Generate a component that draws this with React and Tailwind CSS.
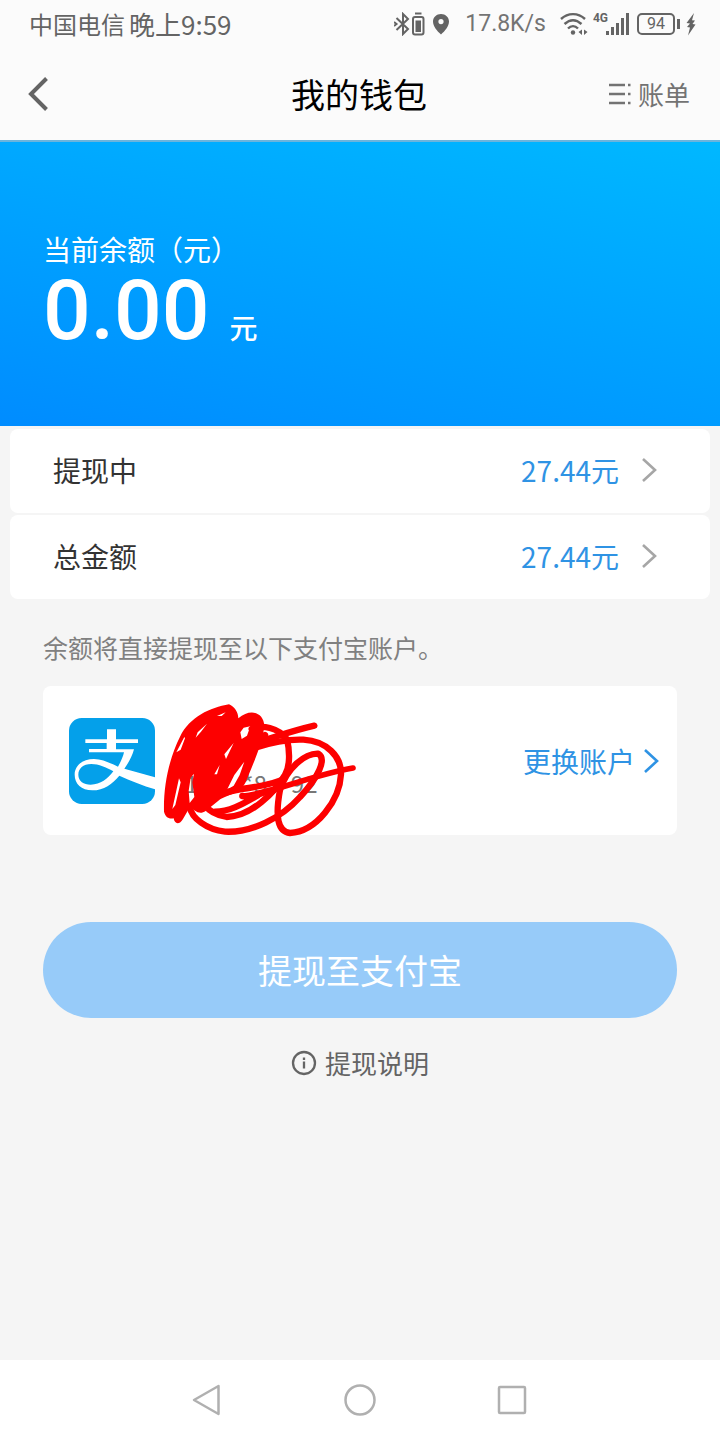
const cjk = "font-['Noto_Sans_CJK_SC',sans-serif]";

function Chevron({ className }) {
  return (
    <svg viewBox="0 0 16 26" className={className} fill="none" stroke="currentColor" strokeWidth="2.6" aria-hidden="true">
      <path d="M2 2 L14 13 L2 24" />
    </svg>
  );
}

function StatusBar() {
  return (
    <div className="flex h-12 items-center pl-[29px] pr-6 text-[#646464]">
      <span className="text-[24px] leading-8">中国电信</span>
      <span className="ml-1 text-[26px] leading-8">晚上9:59</span>
      <div className="ml-auto flex items-center">
        <svg viewBox="0 0 17 24" className="h-6 w-[17px]" fill="none" stroke="currentColor" strokeWidth="2" aria-hidden="true">
          <path d="M2.500 6 L14 17 L9 22 V2 L14 7 L2.500 18" />
          <path d="M0 10 L2.500 12 L0 14" />
        </svg>
        <svg viewBox="0 0 14 24" className="h-6 w-3.5" aria-hidden="true">
          <path d="M4 1.500 H10.500" stroke="currentColor" strokeWidth="2" />
          <rect x="2" y="5" width="10.500" height="17.500" rx="2" fill="none" stroke="currentColor" strokeWidth="2" />
          <rect x="4.500" y="8.500" width="5.500" height="11.500" fill="currentColor" />
        </svg>
        <svg viewBox="0 0 16 22" className="ml-2 h-[22px] w-4" fill="currentColor" fillRule="evenodd" aria-hidden="true">
          <path d="M8 1 C3.500 1 0 4.300 0 8.500 C0 13 4 18 8 21.500 C12 18 16 13 16 8.500 C16 4.300 12.500 1 8 1 Z M8 6 A2.600 2.600 0 1 1 8 11.200 A2.600 2.600 0 1 1 8 6 Z" />
        </svg>
        <span className="ml-4 font-[Roboto,sans-serif] text-[23px] leading-8 text-[#747474]">17.8K/s</span>
        <svg viewBox="0 0 29 24" className="ml-3.5 h-6 w-[29px]" fill="none" stroke="currentColor" strokeWidth="2.400" aria-hidden="true">
          <path d="M1 7 C8 0.500 18 0.500 25 7 M4.500 12 C10 7 16 7 21.500 12 M8 16.500 C11 13.500 15 13.500 18 16.500" />
          <circle cx="13" cy="20.500" r="2.200" fill="currentColor" stroke="none" />
          <path d="M22 17.500 V23 L18.500 20 Z M24 17.500 V23 L27.500 20 Z" fill="currentColor" stroke="none" />
        </svg>
        <span className="mb-3 ml-1 font-[Roboto,sans-serif] text-[12px] font-bold leading-3">4G</span>
        <svg viewBox="0 0 23 24" className="-ml-0.5 h-6 w-[23px]" fill="currentColor" aria-hidden="true">
          <path d="M0 19h3v4H0z M5 15h3v8H5z M10 11h3v12h-3z M15 6h3v17h-3z M20 1h3v22h-3z" />
        </svg>
        <span className="ml-2 flex h-[22px] w-[38px] items-center justify-center rounded-[5px] border-2 border-current font-[Roboto,sans-serif] text-[16px] leading-4">94</span>
        <span className="ml-0.5 h-2.5 w-[3px] bg-current" />
        <svg viewBox="0 0 10 24" className="ml-1.5 h-6 w-2.5" fill="currentColor" aria-hidden="true">
          <path d="M8 1 L0.500 11 L4 11.500 L1 15 L4 15.500 L2 23.500 L9.500 12.500 L6.500 12 L9 8.500 L6 8.200 Z" />
        </svg>
      </div>
    </div>
  );
}

function Header() {
  return (
    <header className="grid h-[92px] grid-cols-[1fr_auto_1fr] items-center pl-7 pr-[30px]">
      <button type="button" aria-label="返回" className="w-5 text-[#646464]">
        <svg viewBox="0 0 20 34" className="h-[34px] w-5" fill="none" stroke="currentColor" strokeWidth="4" aria-hidden="true">
          <path d="M18.500 1.500 L3 17 L18.500 32.500" />
        </svg>
      </button>
      <h1 className="text-[34px] font-normal leading-[48px] text-black">我的钱包</h1>
      <button type="button" className="flex items-center justify-self-end text-[26px] leading-9 text-[#737373]">
        <svg viewBox="0 0 23 22" className="mr-1.5 h-[22px] w-[23px]" fill="none" stroke="currentColor" strokeWidth="2.400" aria-hidden="true">
          <path d="M0 2 H16 M0 11 H16 M0 20 H16 M19 2 H21.500 M19 11 H21.500 M19 20 H21.500" />
        </svg>
        账单
      </button>
    </header>
  );
}

function AmountRow({ label, value }) {
  return (
    <button type="button" className="flex h-[84px] w-full items-center rounded-lg bg-white pb-0.5 pl-[43px] pr-[53px]">
      <span className="text-[28px] leading-10 text-[#333333]">{label}</span>
      <span className="ml-auto text-[28px] leading-10 text-[#2f93e4]">{value}</span>
      <Chevron className="ml-[22px] h-[26px] w-4 text-[#a6a6a6]" />
    </button>
  );
}

function AlipayLogo() {
  return (
    <svg viewBox="0 0 258 258" className="h-[86px] w-[86px] shrink-0" role="img" aria-label="支付宝">
      <rect width="258" height="258" rx="38" fill="#04a0ea" />
      <path
        fill="#fff"
        fillRule="evenodd"
        d="M114 34 H141 V64 H207 V75 H141 V94 H195 C190 114 177 137 166 152 L258 178 V214 C222 204 184 187 151 173 C130 198 105 217 70 217 C37 217 17 197 17 170 C17 141 43 123 75 123 C101 123 127 137 147 146 C155 132 162 117 165 103 H60 V93 H113 V75 H49 V64 H114 Z M133 160 C111 148 90 138 67 138 C42 138 28 152 28 170 C28 189 44 200 65 200 C95 200 116 182 133 160 Z"
      />
    </svg>
  );
}

function Scribble() {
  return (
    <svg
      viewBox="0 0 630 450"
      className="pointer-events-none absolute left-28 top-[9px] h-[150px] w-[210px]"
      fill="none"
      stroke="#fd0000"
      strokeWidth="19"
      strokeLinecap="round"
      strokeLinejoin="round"
      aria-hidden="true"
    >
      <path d="M90 108 L100 120" stroke="#333333" strokeWidth="6" />
      <path d="M300 158 C350 142 400 132 445 134 C515 138 560 185 558 238 C554 315 485 410 405 414 C368 410 360 365 375 285 C395 220 450 174 490 176 C516 192 490 248 435 306 C380 368 290 414 210 410 C155 404 110 370 104 335" />
      <path d="M265 303 C360 292 470 240 594 219" strokeWidth="17" />
      <path d="M270 152 C345 132 400 110 478 92" />
      <path
        d="M222 28 C165 38 105 65 75 125 C45 185 25 265 27 350 C32 370 45 372 56 370 C58 388 74 390 84 372 L106 334 C118 350 135 360 152 348 L192 316 C212 300 252 300 272 262 C290 215 322 150 328 92 C326 52 286 38 250 70 C250 52 238 34 222 28 Z
           M52 342 L72 250 L77 262 L61 330 Z
           M101 288 L107 248 L117 236 L112 262 L118 306 L104 324 Z
           M64 172 L88 126 L90 130 L77 164 Z
           M122 128 L128 112 L156 86 L138 110 Z
           M186 63 L212 52 L200 63 Z
           M216 284 L238 240 L268 200 L254 240 L236 272 Z
           M256 112 L266 98 L286 94 L276 122 L260 132 Z
           M208 178 L236 144 L213 192 Z
           M178 238 L194 210 L186 238 Z"
        fill="#fd0000"
        fillRule="evenodd"
        stroke="none"
      />
      <path d="M290 102 C320 88 370 98 396 133 C405 170 405 215 390 240 C360 290 290 365 215 366 C180 360 160 345 150 330" />
      <path d="M302 112 C304 160 320 130 330 120" />
      <path d="M262 303 C310 310 325 285 355 286 M180 305 C230 275 320 285 386 252 M180 350 C220 350 260 330 310 300" />
    </svg>
  );
}

function AccountCard() {
  return (
    <section className="relative mt-[22px] flex h-[149px] items-center rounded-lg bg-white pl-[26px] pr-[18px]">
      <AlipayLogo />
      <div className="ml-[30px] mt-11 flex gap-6 text-[24px] leading-8 text-[#777777]">
        <span className="flex gap-11">
          <span>1</span>
          <span>*8</span>
        </span>
        <span>92</span>
      </div>
      <Scribble />
      <button type="button" className="ml-auto flex items-center text-[28px] leading-10 text-[#2f93e4]">
        更换账户
        <Chevron className="ml-2 h-[26px] w-4" />
      </button>
    </section>
  );
}

function SystemNav() {
  return (
    <nav className="flex h-20 items-center justify-center gap-[120px] bg-white text-[#b0b0b0]">
      <button type="button" aria-label="返回">
        <svg viewBox="0 0 32 32" className="h-8 w-8" fill="none" stroke="currentColor" strokeWidth="2.500" strokeLinejoin="round">
          <path d="M26.500 2 L2 16 L26.500 30 Z" />
        </svg>
      </button>
      <button type="button" aria-label="主屏幕">
        <svg viewBox="0 0 32 32" className="h-8 w-8" fill="none" stroke="currentColor" strokeWidth="2.500">
          <circle cx="16" cy="16" r="14.500" />
        </svg>
      </button>
      <button type="button" aria-label="最近任务">
        <svg viewBox="0 0 32 32" className="h-8 w-8" fill="none" stroke="currentColor" strokeWidth="2.500">
          <rect x="3" y="3" width="26" height="26" rx="1" />
        </svg>
      </button>
    </nav>
  );
}

export default function App() {
  return (
    <div className={`${cjk} flex min-h-screen flex-col bg-[#f5f5f5]`}>
      <div className="border-b-2 border-[#6cb4dc] bg-[#fbfbfb]">
        <StatusBar />
        <Header />
      </div>
      <section className="h-[284px] bg-[linear-gradient(192deg,#00b8ff_0%,#008cff_100%)] px-[43px] pt-[87px] text-white">
        <p className="text-[28px] leading-10">当前余额（元）</p>
        <p className="flex items-baseline gap-5 leading-[84px]">
          <span className="font-[Roboto,sans-serif] text-[84px] font-medium">0.00</span>
          <span className="text-[28px] font-medium">元</span>
        </p>
      </section>
      <div className="flex flex-col gap-0.5 px-2.5 pt-[3px]">
        <AmountRow label="提现中" value="27.44元" />
        <AmountRow label="总金额" value="27.44元" />
      </div>
      <main className="px-[43px] pt-8">
        <p className="text-[25px] leading-8 text-[#808080]">余额将直接提现至以下支付宝账户。</p>
        <div className="pt-px">
          <AccountCard />
        </div>
        <button type="button" className="mt-[87px] h-24 w-full rounded-full bg-[#97cbf9] text-[34px] leading-[48px] text-white">
          提现至支付宝
        </button>
        <button type="button" className="mx-auto mt-[27px] flex items-center gap-2 text-[26px] leading-9 text-[#646464]">
          <svg viewBox="0 0 26 26" className="h-[26px] w-[26px]" fill="none" stroke="currentColor" strokeWidth="2.300" aria-hidden="true">
            <circle cx="13" cy="13" r="11" />
            <path d="M13 11.500 V18.500 M13 7.500 V10" />
          </svg>
          提现说明
        </button>
      </main>
      <div className="mt-auto">
        <SystemNav />
      </div>
    </div>
  );
}
